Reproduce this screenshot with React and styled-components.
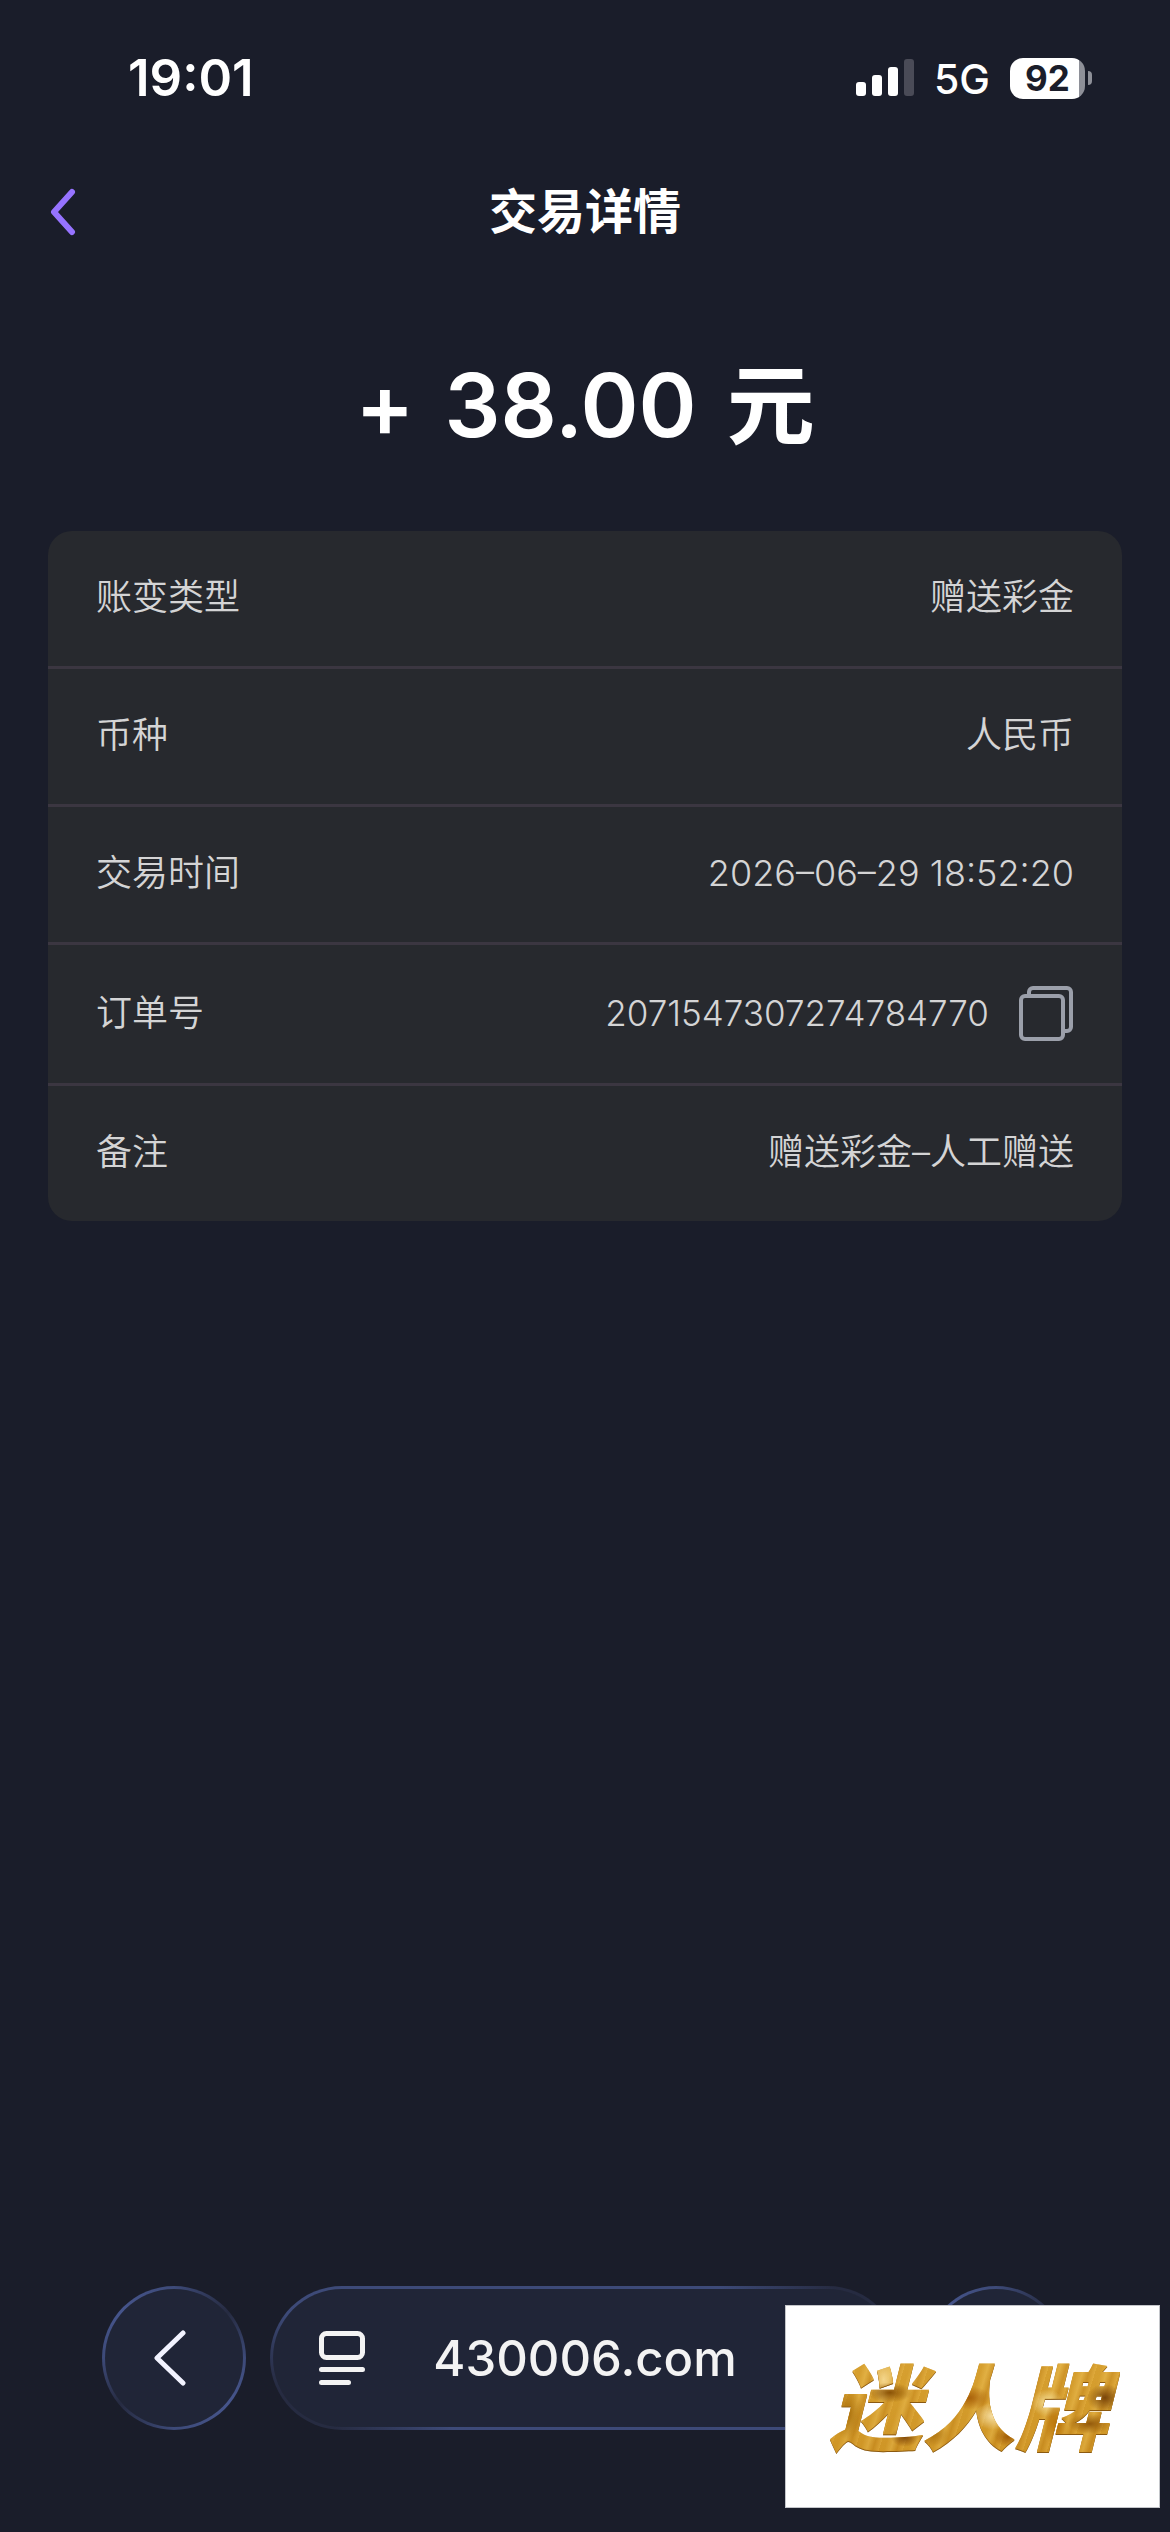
import React from 'react'
import styled, { createGlobalStyle } from 'styled-components'

const GlobalStyle = createGlobalStyle`
    * {
        box-sizing: border-box;
    }

    body {
        margin: 0;
        background: #1a1d2a;
        color: #ffffff;
        font-family: Inter, "Noto Sans CJK SC", sans-serif;
    }

    button, input {
        margin: 0;
        padding: 0;
        border: 0;
        background: none;
        color: inherit;
        font: inherit;
    }

    svg {
        display: block;
    }
`

const Page = styled.div`
    position: relative;
    display: flex;
    flex-direction: column;
    min-height: 100vh;
`

const StatusBar = styled.div`
    display: flex;
    align-items: center;
    justify-content: space-between;
    height: 156px;
    padding: 0 78px 0 128px;
`

const Time = styled.time`
    font-size: 51px;
    font-weight: 600;
    line-height: 60px;
`

const StatusIcons = styled.div`
    display: flex;
    align-items: center;
    gap: 20px;
`

const Network = styled.span`
    padding-top: 2px;
    font-size: 41px;
    font-weight: 500;
    line-height: 48px;
`

const Battery = styled.div`
    display: flex;
    align-items: center;
    gap: 3px;
`

const BatteryBody = styled.div`
    width: 75px;
    border-radius: 13px;
    background: linear-gradient(90deg, #ffffff ${({ level }) => level}%, #8e9098 ${({ level }) => level}%);
    color: #1a1d2a;
    font-size: 35px;
    font-weight: 700;
    line-height: 41px;
    text-align: center;
`

const BatteryTip = styled.div`
    width: 4px;
    height: 14px;
    border-radius: 0 4px 4px 0;
    background: #8e9098;
`

const Header = styled.header`
    display: grid;
    grid-template-columns: 1fr auto 1fr;
    align-items: center;
    height: 112px;
    padding: 0 48px;
`

const BackButton = styled.button`
    justify-self: start;
    color: #9673ff;
`

const Title = styled.h1`
    margin: 0;
    font-size: 48px;
    font-weight: 600;
    line-height: 72px;
`

const Main = styled.main`
    flex: 1;
    padding: 72px 48px 48px;
`

const Amount = styled.p`
    display: flex;
    justify-content: center;
    gap: 30px;
    margin: 0 0 61px;
    font-size: 88px;
    font-weight: 600;
    line-height: 130px;
`

const Details = styled.dl`
    margin: 0;
    border-radius: 24px;
    background: #27292e;
    overflow: hidden;
`

const Row = styled.div`
    display: flex;
    align-items: center;
    justify-content: space-between;
    padding: 39px 48px 42px;
    color: #d4d4d5;
    font-size: 36px;
    font-weight: 350;
    line-height: 54px;

    & + & {
        border-top: 3px solid #3b3641;
    }
`

const Label = styled.dt``

const Value = styled.dd`
    display: flex;
    align-items: center;
    gap: 30px;
    margin: 0;
`

const OrderNumber = styled.span`
    font-size: 35px;
`

const CopyButton = styled.button`
    padding-top: 2px;
    color: #9b9faa;
`

const Toolbar = styled.nav`
    display: flex;
    gap: 24px;
    padding: 0 102px 102px;
`

const glass = `
    height: 144px;
    border: 3px solid transparent;
    border-radius: 72px;
`

const RoundButton = styled.button`
    ${glass}
    display: flex;
    align-items: center;
    justify-content: center;
    width: 144px;
    background:
        linear-gradient(#202537, #202537) padding-box,
        conic-gradient(#3d4a78, #262b41 50deg, #3d4a78 90deg, #46558c 130deg, #3d4a78 180deg, #262b41 230deg, #3d4a78 270deg, #46558c 310deg, #3d4a78) border-box;
    color: #f2f3ff;
`

const AddressBar = styled.div`
    ${glass}
    display: flex;
    flex: 1;
    align-items: center;
    min-width: 0;
    padding: 0 46px;
    background:
        linear-gradient(#202537, #202537) padding-box,
        linear-gradient(35deg, #262b41 8%, #3d4a78 22%, #3d4a78 78%, #262b41 92%) border-box;
    color: #f3f3f3;
`

const AddressInput = styled.input`
    flex: 1;
    min-width: 0;
    margin-right: 46px;
    padding-top: 2px;
    font-size: 49px;
    font-weight: 500;
    line-height: 60px;
    text-align: center;
    outline: none;
`

const Banner = styled.a`
    position: absolute;
    right: 10px;
    bottom: 24px;
    display: flex;
    align-items: center;
    justify-content: center;
    width: 375px;
    height: 203px;
    padding: 0 8px 8px 0;
    border: 1px solid #c4c6ca;
    background: #ffffff;
    text-decoration: none;
`

const GoldText = styled.span`
    padding: 0 12px;
    background:
        radial-gradient(ellipse 22px 10px at 24% 42%, #8a5205, transparent),
        radial-gradient(ellipse 16px 26px at 10% 58%, #a96f0c, transparent),
        radial-gradient(ellipse 14px 10px at 29% 76%, #80480a, transparent),
        radial-gradient(ellipse 22px 12px at 50% 46%, #a8600a, transparent),
        radial-gradient(ellipse 16px 12px at 38% 74%, #ad7414, transparent),
        radial-gradient(ellipse 12px 24px at 79% 66%, #b87208, transparent),
        radial-gradient(ellipse 18px 14px at 95% 46%, #7a460a, transparent),
        radial-gradient(ellipse 22px 10px at 90% 66%, #93590a, transparent),
        radial-gradient(ellipse 14px 10px at 63% 76%, #a05c08, transparent),
        radial-gradient(ellipse 14px 24px at 22% 32%, #f4d68c, transparent),
        radial-gradient(ellipse 18px 14px at 58% 60%, #f6dfa4, transparent),
        radial-gradient(ellipse 16px 14px at 76% 50%, #f6e09a, transparent),
        repeating-linear-gradient(107deg, #d29a2a80 0 5px, #e9bc5280 11px, #c2851c80 17px, #e4b04480 23px),
        linear-gradient(#dfab3c, #c98d1e);
    background-clip: text;
    -webkit-background-clip: text;
    color: transparent;
    font-family: "Noto Sans CJK SC", sans-serif;
    font-size: 93px;
    font-style: italic;
    font-weight: 900;
    line-height: 130px;
    filter: drop-shadow(0 1px 0 #8c5a10);
`

const Signal = () => (
    <svg width="58" height="38" viewBox="0 0 58 38" fill="#fff" aria-hidden="true">
        <rect x="0" y="23" width="10" height="14" rx="3" />
        <rect x="16" y="16" width="10" height="21" rx="3" />
        <rect x="32" y="8" width="10" height="29" rx="3" />
        <rect x="48" y="0" width="10" height="37" rx="3" fill="#4a4b57" />
    </svg>
)

const BackIcon = () => (
    <svg width="30" height="48" viewBox="0 0 30 48" fill="none" aria-hidden="true">
        <path
            d="M24 4L6 24l18 20"
            stroke="currentColor"
            strokeWidth="6"
            strokeLinecap="round"
            strokeLinejoin="round"
        />
    </svg>
)

const CopyIcon = () => (
    <svg width="55" height="55" viewBox="0 0 55 55" fill="none" aria-hidden="true">
        <g stroke="currentColor" strokeWidth="4">
            <rect x="2" y="10" width="42" height="43" rx="4" />
            <path d="M10 10V6a4 4 0 0 1 4-4h34a4 4 0 0 1 4 4v35a4 4 0 0 1-4 4h-4" />
        </g>
    </svg>
)

const PreviousIcon = () => (
    <svg width="48" height="56" viewBox="0 0 48 56" fill="none" aria-hidden="true">
        <path
            d="M33 3L7 28l26 25"
            stroke="currentColor"
            strokeWidth="5"
            strokeLinecap="round"
            strokeLinejoin="round"
        />
    </svg>
)

const ReaderIcon = () => (
    <svg width="46" height="54" viewBox="0 0 46 54" fill="none" aria-hidden="true">
        <g stroke="currentColor" strokeWidth="5" strokeLinecap="round">
            <rect x="2.5" y="2.5" width="41" height="24" rx="5" />
            <path d="M2.5 38.5h41M2.5 51.5h27" />
        </g>
    </svg>
)

const details = [
    { label: '账变类型', value: '赠送彩金' },
    { label: '币种', value: '人民币' },
    { label: '交易时间', value: '2026–06–29 18:52:20' },
    {
        label: '订单号',
        value: (
            <>
                <OrderNumber>2071547307274784770</OrderNumber>
                <CopyButton type="button" aria-label="复制">
                    <CopyIcon />
                </CopyButton>
            </>
        ),
    },
    { label: '备注', value: '赠送彩金–人工赠送' },
]

export default function App() {
    return (
        <Page>
            <GlobalStyle />
            <StatusBar>
                <Time>19:01</Time>
                <StatusIcons>
                    <Signal />
                    <Network>5G</Network>
                    <Battery>
                        <BatteryBody level={92}>92</BatteryBody>
                        <BatteryTip />
                    </Battery>
                </StatusIcons>
            </StatusBar>
            <Header>
                <BackButton type="button" aria-label="返回">
                    <BackIcon />
                </BackButton>
                <Title>交易详情</Title>
            </Header>
            <Main>
                <Amount>
                    <span>+</span>
                    <span>38.00</span>
                    <span>元</span>
                </Amount>
                <Details>
                    {details.map(({ label, value }) => (
                        <Row key={label}>
                            <Label>{label}</Label>
                            <Value>{value}</Value>
                        </Row>
                    ))}
                </Details>
            </Main>
            <Toolbar>
                <RoundButton type="button" aria-label="后退">
                    <PreviousIcon />
                </RoundButton>
                <AddressBar>
                    <button type="button" aria-label="页面菜单">
                        <ReaderIcon />
                    </button>
                    <AddressInput aria-label="地址" defaultValue="430006.com" />
                </AddressBar>
                <RoundButton type="button" aria-label="更多" />
            </Toolbar>
            <Banner href="#">
                <GoldText>迷人牌</GoldText>
            </Banner>
        </Page>
    )
}
